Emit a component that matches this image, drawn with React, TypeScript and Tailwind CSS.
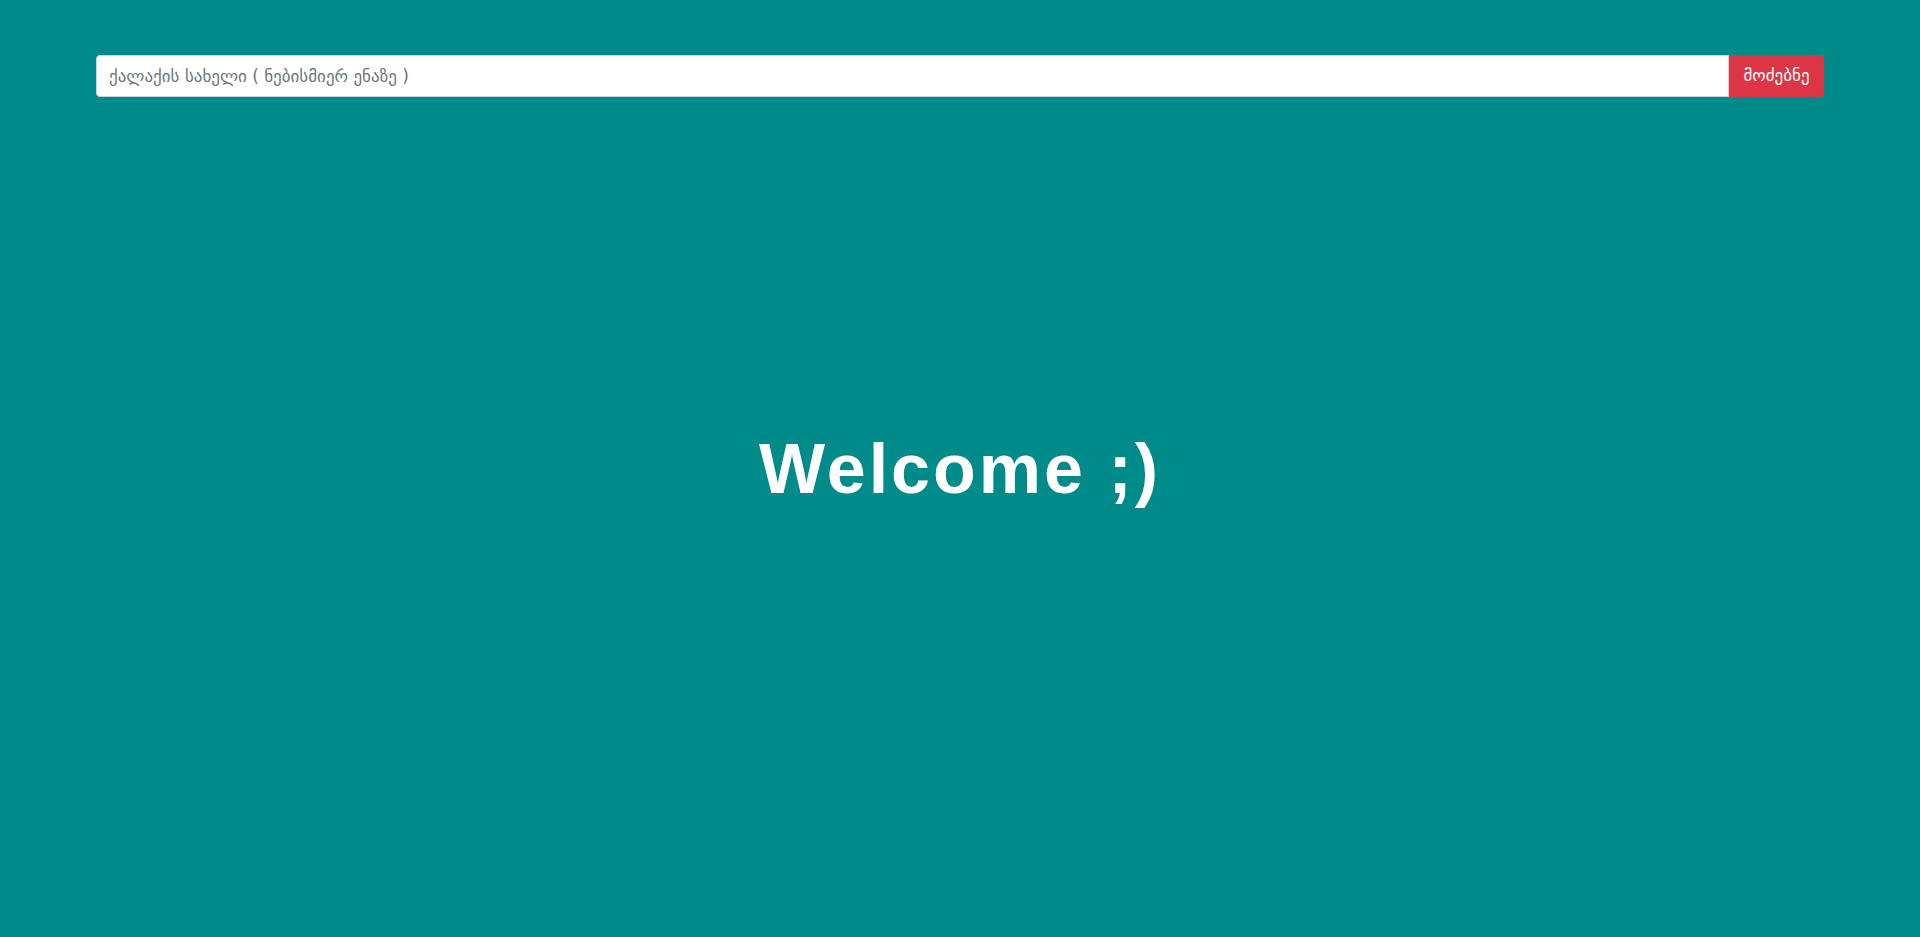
export default function App() {
  return (
    <div className="flex h-screen flex-col bg-[#008b8b] px-[96px] pt-[55px] font-['Liberation_Sans',sans-serif]">
      <form className="flex h-[42px] w-full" onSubmit={(e) => e.preventDefault()}>
        <input
          type="text"
          placeholder="ქალაქის სახელი ( ნებისმიერ ენაზე )"
          className="h-full flex-1 rounded-l-[4px] border border-[#ced4da] bg-white px-[12px] font-['DejaVu_Sans',sans-serif] text-[17px] text-[#495057] placeholder:text-[#6c757d] outline-none"
        />
        <button
          type="submit"
          className="h-full w-[95px] rounded-r-[4px] bg-[#dc3545] font-['DejaVu_Sans',sans-serif] text-[17px] text-white"
        >
          მოძებნე
        </button>
      </form>

      <main className="flex flex-1 items-center justify-center pb-[97px]">
        <h1 className="text-[70px] font-bold leading-none tracking-[3px] text-white">
          Welcome ;)
        </h1>
      </main>
    </div>
  );
}
